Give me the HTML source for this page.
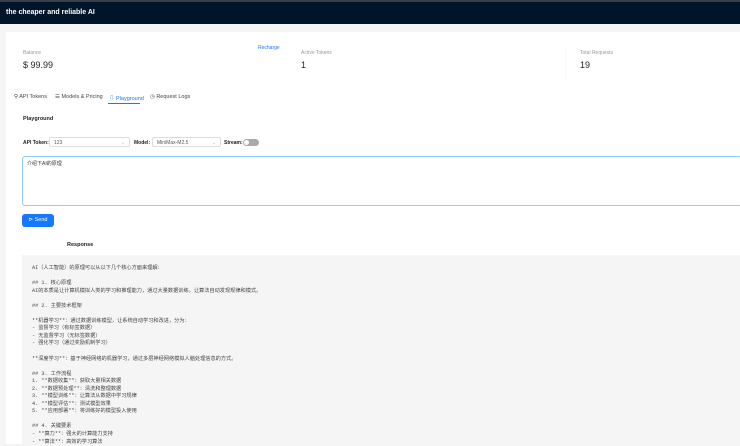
<!DOCTYPE html>
<html><head><meta charset="utf-8"><style>
*{margin:0;padding:0;box-sizing:border-box}
body{width:740px;height:444px;overflow:hidden;background:#f5f5f5;font-family:"Liberation Sans","Noto Sans CJK SC",sans-serif;position:relative;color:#222}
.a{position:absolute}
.hdr{left:0;top:0;width:740px;height:24px;background:#001529;border-top:2px solid #3a3f47}
.hdr span{position:absolute;left:6px;top:7px;color:#fff;font-weight:bold;font-size:7px}
.card{left:6px;top:32px;width:734px;height:412px;background:#fff}
.lbl{font-size:5px;color:#999}
.val{font-size:9px;color:#222}
.tab{font-size:5.5px;color:#444;top:94px}
.resp{left:22px;top:255px;width:718px;height:189px;background:#f5f5f5;font-size:5.2px;color:#444;padding:10px 0 0 10px;line-height:7.55px;white-space:pre;font-family:"Liberation Mono","Noto Sans CJK SC",monospace}
.sel{height:10px;border:1px solid #ddd;border-radius:2px;font-size:5px;color:#555;padding:2px 4px;top:137px}
</style></head><body>
<div class="a hdr"><span>the cheaper and reliable AI</span></div>
<div class="a card"></div>
<div class="a lbl" style="left:23px;top:50px">Balance</div>
<div class="a val" style="left:23px;top:60px">$ 99.99</div>
<div class="a" style="left:258px;top:45px;font-size:5px;color:#1677ff">Recharge</div>
<div class="a lbl" style="left:301px;top:50px">Active Tokens</div>
<div class="a val" style="left:301px;top:60px">1</div>
<div class="a" style="left:565px;top:48px;width:1px;height:32px;background:#f8f8f8"></div>
<div class="a lbl" style="left:580px;top:50px">Total Requests</div>
<div class="a val" style="left:580px;top:60px">19</div>
<div class="a tab" style="left:14px">⚲ API Tokens</div>
<div class="a tab" style="left:55px">☰ Models &amp; Pricing</div>
<div class="a tab" style="left:109px;color:#1677ff">⇩ Playground</div>
<div class="a" style="left:108px;top:103px;width:32px;height:1px;background:#1677ff"></div>
<div class="a tab" style="left:150px">◷ Request Logs</div>
<div class="a" style="left:23px;top:116px;font-size:5.5px;font-weight:bold">Playground</div>
<div class="a" style="left:23px;top:140px;font-size:5px;font-weight:bold">API Token:</div>
<div class="a sel" style="left:49px;width:81px">123<span style="float:right;color:#bbb">⌄</span></div>
<div class="a" style="left:134px;top:140px;font-size:5px;font-weight:bold">Model:</div>
<div class="a sel" style="left:152px;width:69px">MiniMax-M2.5<span style="float:right;color:#bbb">⌄</span></div>
<div class="a" style="left:224px;top:140px;font-size:5px;font-weight:bold">Stream:</div>
<div class="a" style="left:243px;top:139px;width:16px;height:7px;border-radius:4px;background:#aaa"><div style="position:absolute;left:1px;top:1px;width:5px;height:5px;border-radius:50%;background:#fff"></div></div>
<div class="a" style="left:22px;top:156px;width:720px;height:50px;border:1px solid #91caff;border-radius:3px;font-size:5px;padding:3px 4px;color:#333">介绍下AI的原理</div>
<div class="a" style="left:22px;top:214px;width:32px;height:13px;background:#1677ff;border-radius:3px;color:#fff;font-size:5.5px;line-height:13px;text-align:center">⊳ Send</div>
<div class="a" style="left:67px;top:242px;font-size:5.5px;font-weight:bold">Response</div>
<div class="a resp">AI（人工智能）的原理可以从以下几个核心方面来理解：

## 1. 核心原理
AI的本质是让计算机模拟人类的学习和推理能力，通过大量数据训练，让算法自动发现规律和模式。

## 2. 主要技术框架

**机器学习**：通过数据训练模型，让系统自动学习和改进，分为：
- 监督学习（有标签数据）
- 无监督学习（无标签数据）
- 强化学习（通过奖励机制学习）

**深度学习**：基于神经网络的机器学习，通过多层神经网络模拟人脑处理信息的方式。

## 3. 工作流程
1. **数据收集**：获取大量相关数据
2. **数据预处理**：清洗和整理数据
3. **模型训练**：让算法从数据中学习规律
4. **模型评估**：测试模型效果
5. **应用部署**：将训练好的模型投入使用

## 4. 关键要素
- **算力**：强大的计算能力支持
- **算法**：高效的学习算法</div>
</body></html>
